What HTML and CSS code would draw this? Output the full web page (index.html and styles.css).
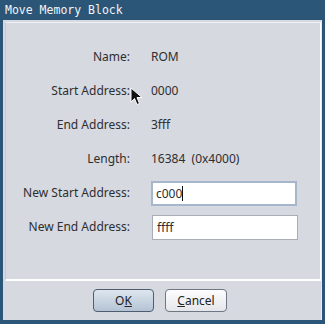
FILE: index.html
```html
<!DOCTYPE html>
<html lang="en">
<head>
  <meta charset="UTF-8" />
  <title>Move Memory Block</title>
  <link rel="stylesheet" href="styles.css">
</head>
<body>
  <div class="window">
    <div class="titlebar">Move Memory Block</div>
    <div class="client">
      <div class="panel">
        <div class="form">
          <div class="label">Name:</div>
          <div class="value">ROM</div>
          <div class="label">Start Address:</div>
          <div class="value">0000</div>
          <div class="label">End Address:</div>
          <div class="value">3fff</div>
          <div class="label">Length:</div>
          <div class="value">16384&nbsp; (0x4000)</div>
          <div class="label">New Start Address:</div>
          <div class="value"><div class="field focused">c000<span class="caret"></span></div></div>
          <div class="label">New End Address:</div>
          <div class="value"><div class="field">ffff</div></div>
        </div>
      </div>
      <div class="buttons">
        <button class="btn default">O<u>K</u></button>
        <button class="btn"><u>C</u>ancel</button>
      </div>
    </div>
    <svg class="pointer" width="14" height="20" viewBox="0 0 14 20">
      <path d="M1 1 L1 15 L4.5 11.5 L7 17.5 L9.5 16.5 L7 10.5 L12 10.5 Z" fill="#111" stroke="#fff" stroke-width="1"/>
    </svg>
  </div>
</body>
</html>
```

FILE: styles.css
```css
html, body {
  margin: 0;
  padding: 0;
}
body {
  width: 325px;
  height: 324px;
  overflow: hidden;
  font-family: "Noto Sans", "Open Sans", sans-serif;
}
.window {
  position: relative;
  width: 325px;
  height: 324px;
  box-sizing: border-box;
  background: #2b5678;
  padding: 0 3px 4px 3px;
  display: flex;
  flex-direction: column;
}
.titlebar {
  height: 20px;
  line-height: 20px;
  color: #f2f4f7;
  font-family: "DejaVu Sans Mono", monospace;
  font-size: 11.5px;
  padding-left: 2px;
}
.client {
  flex: 1;
  background: #d6d9e0;
  display: flex;
  flex-direction: column;
  border-right: 1px solid #e8eaee;
}
.panel {
  margin: 2px 0 0 2px;
  height: 259px;
  border-top: 1px solid #eef0f3;
  border-left: 1px solid #c6c9d0;
  border-right: 1px solid #ffffff;
  border-bottom: 2px solid #ffffff;
  box-sizing: border-box;
  padding-top: 17px;
}
.form {
  display: grid;
  grid-template-columns: 124px 1fr;
  column-gap: 21px;
  grid-auto-rows: 34px;
  font-size: 12px;
  color: #2e2e30;
}
.label {
  text-align: right;
  line-height: 34px;
}
.value {
  line-height: 34px;
}
.field {
  box-sizing: border-box;
  width: 146px;
  height: 25px;
  margin-top: 5px;
  margin-left: 1px;
  background: #ffffff;
  border: 1px solid #a9adb5;
  line-height: 23px;
  padding-left: 4px;
}
.field.focused {
  border: 2px solid #a6b6cc;
  padding-left: 3px;
  line-height: 21px;
  margin-left: 0;
}
.caret {
  display: inline-block;
  width: 1px;
  height: 15px;
  background: #111;
  vertical-align: -3px;
}
.buttons {
  flex: 1;
  display: flex;
  justify-content: center;
  align-items: center;
  gap: 11px;
  padding-right: 4px;
}
.btn {
  font-family: "Noto Sans", "Open Sans", sans-serif;
  font-size: 12px;
  color: #222;
  height: 23px;
  border-radius: 4px;
  border: 1px solid #6f7784;
  background: linear-gradient(#fdfdfe, #e4e6ea);
  padding: 0;
  width: 62px;
}
.btn.default {
  width: 61px;
  background: linear-gradient(#dde6ef, #b4c3d4);
  border-color: #4f5d6e;
}
.pointer {
  position: absolute;
  left: 130px;
  top: 87px;
}
```
